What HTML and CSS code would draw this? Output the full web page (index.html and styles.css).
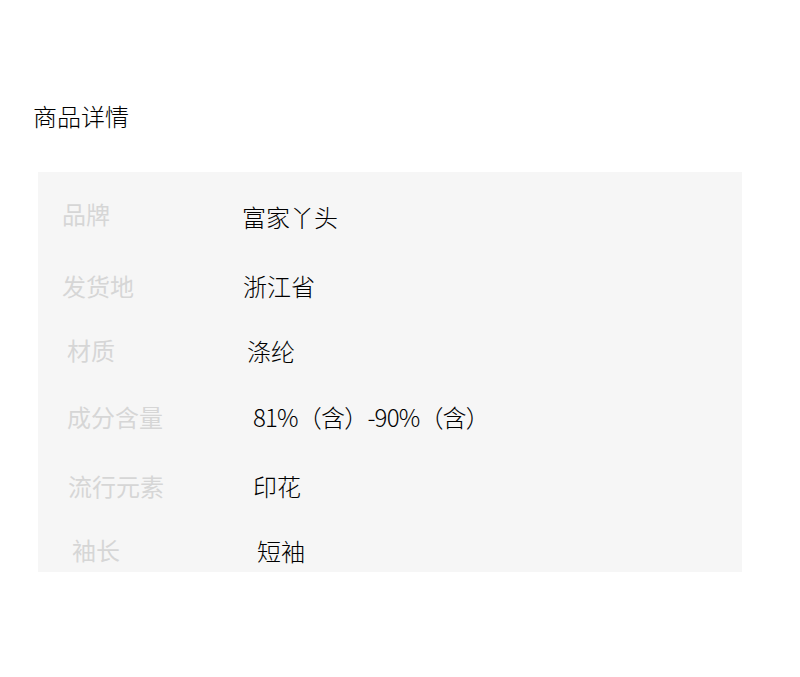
FILE: index.html
```html
<!DOCTYPE html>
<html lang="zh-CN">
<head>
<meta charset="utf-8">
<title>商品详情</title>
<link rel="stylesheet" href="styles.css">
</head>
<body>
<div class="page">
  <h2 class="title">商品详情</h2>
  <div class="panel">
    <div class="row r1"><span class="label">品牌</span><span class="value">富家丫头</span></div>
    <div class="row r2"><span class="label">发货地</span><span class="value">浙江省</span></div>
    <div class="row r3"><span class="label">材质</span><span class="value">涤纶</span></div>
    <div class="row r4"><span class="label">成分含量</span><span class="value">81%（含）-90%（含）</span></div>
    <div class="row r5"><span class="label">流行元素</span><span class="value">印花</span></div>
    <div class="row r6"><span class="label">袖长</span><span class="value">短袖</span></div>
  </div>
</div>
</body>
</html>
```

FILE: styles.css
```css
html, body {
  margin: 0;
  padding: 0;
  background: #ffffff;
}

.page {
  width: 800px;
  height: 677px;
  font-family: "Noto Sans CJK SC", "Noto Sans", sans-serif;
}

.title {
  margin: 0;
  padding: 104px 0 0 33px;
  height: 172px;
  box-sizing: border-box;
  font-size: 24px;
  line-height: 24px;
  font-weight: 300;
  color: #000000;
}

.panel {
  margin-left: 38px;
  width: 704px;
  height: 400px;
  box-sizing: border-box;
  padding-top: 30px;
  background: #f6f6f6;
}

.row {
  display: flex;
  align-items: flex-start;
  font-size: 24px;
  line-height: 24px;
}

.label {
  flex: none;
  color: #d6d6d6;
}

.value {
  color: #000000;
  font-weight: 300;
  white-space: nowrap;
}

.r1 { height: 72px; padding-left: 24px; }
.r1 .label { width: 180px; }
.r1 .value { margin-top: 3px; }

.r2 { height: 64px; padding-left: 24px; }
.r2 .label { width: 181px; }

.r3 { height: 67px; padding-left: 29px; }
.r3 .label { width: 180px; }
.r3 .value { margin-top: 1px; }

.r4 { height: 69px; padding-left: 29px; }
.r4 .label { width: 186px; }
.r4 .value { letter-spacing: -0.8px; }

.r5 { height: 64px; padding-left: 30px; }
.r5 .label { width: 185px; }

.r6 { height: 34px; padding-left: 34px; }
.r6 .label { width: 185px; }
.r6 .value { margin-top: 1px; }
```
